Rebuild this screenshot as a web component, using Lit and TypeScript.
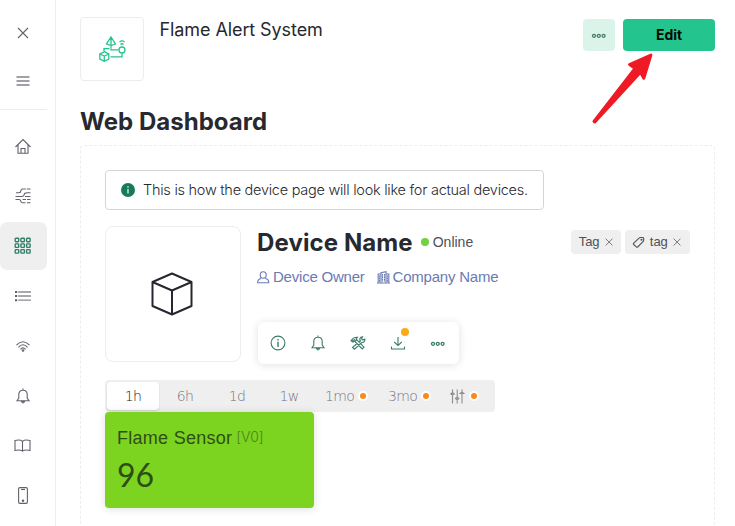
import { LitElement, html, css, svg } from "lit";
import { customElement, property } from "lit/decorators.js";

const shapes: Record<string, { box: string; body: unknown }> = {
  close: { box: "0 0 12 12", body: svg`<path d="M1 1L11 11M11 1L1 11"/>` },
  menu: { box: "0 0 14 12", body: svg`<g stroke-width="1.500" opacity=".8"><path d="M.5 2H13.500M.5 6H13.500M.5 10H13.500"/></g>` },
  home: { box: "0 0 16 16", body: svg`<path d="M.5 9L8 1.500L15.500 9M3 7V15.300H13V7M6 15.300V10.500H10V15.300"/>` },
  flow: {
    box: "0 0 16 16",
    body: svg`<path d="M15.500 1H11.800M10.800 1H8Q5.800 1 5.800 3Q5.800 4.700 4 4.700H1M15.500 4.700H12L9.500 5.500Q9 8.500 7 8.500H.5M15.500 8.500H10M.5 11.500H4Q5.500 11.500 5.800 13.200Q6 14.800 8 14.800H10.500M7.500 11.500H11M12 11.500H15.500M12 14.800H15.500"/>`,
  },
  grid: {
    box: "0 0 18 18",
    body: svg`<g stroke-width="1.400">${[1.2, 6.9, 12.6].map((y) =>
      [1.2, 6.9, 12.6].map((x) => svg`<rect x=${x} y=${y} width="3.500" height="3.500" rx=".7"/>`)
    )}</g>`,
  },
  list: { box: "0 0 16 12", body: svg`<path d="M3.200 2H16M3.200 6H16M3.200 10.200H16" stroke-width="1.300" opacity=".75"/><path d="M0 2H2.200M0 6H2.200M0 10.200H2.200" stroke-width="1.900"/>` },
  wifi: {
    box: "0 0 16 13",
    body: svg`<path d="M1.500 5.200Q8 -1.700 14.500 5.200M3.500 7.300Q8 2.300 12.500 7.300M5.500 9.300Q8 6.500 10.500 9.300"/><circle cx="8" cy="10.500" r=".8"/>`,
  },
  bell: {
    box: "0 0 14 16",
    body: svg`<path d="M1 12.700L2.800 10V6.500Q2.800 2.200 7 2.200T11.200 6.500V10L13 12.700ZM7 .5V2M5.500 13.500Q7 16.500 8.500 13.500Z"/>`,
  },
  book: { box: "0 0 18 14", body: svg`<path d="M8.500 2.300C6.500.6 3.500.8 1 1.500V11.500C3.500 10.800 6.500 10.800 8.500 12C10.500 10.800 13.500 10.800 16 11.500V1.500C13.500.8 10.500.6 8.500 2.300V12"/>` },
  phone: { box: "0 0 11 18", body: svg`<rect x=".6" y=".6" width="8.800" height="15.800" rx="1.300"/><path d="M3 2.500H7"/><circle cx="5" cy="13.700" r=".7"/>` },
  more: { box: "0 0 15 5", body: svg`<g stroke-width="1.300"><circle cx="2" cy="2.800" r="1.500"/><circle cx="6.800" cy="2.800" r="1.500"/><circle cx="11.600" cy="2.800" r="1.500"/></g>` },
  infoFill: { box: "0 0 14 14", body: svg`<circle cx="7" cy="7" r="7" fill="currentColor" stroke="none"/><path d="M7 6V10.500M7 3.300V4.700" stroke="#d6e8e2" stroke-width="1.400"/>` },
  info: { box: "0 0 16 16", body: svg`<circle cx="8" cy="8" r="6.900"/><path d="M8 6.700V12M8 4V5.500" stroke-width="1.400"/>` },
  tools: {
    box: "0 0 16 14",
    body: svg`<path d="M1 4.800Q3 1 7.500 1.200L6 3L14 11.200L12.200 13L4.500 5L3 6ZM10 4.500Q9 1.500 12.500.8L11.500 2.800L13 4L14.800 3Q15.300 6.500 11.800 6.500L4.500 13.200L2.500 11.500L7 7.500M2 4.500L5 3.500M7 4L5 5M9 6L11 4.500"/>`,
  },
  download: { box: "0 0 16 14", body: svg`<path d="M8 1V9.500M4.300 6L8 9.600L11.700 6M1.500 10.500V13H14.500V10.500"/>` },
  user: { box: "0 0 13 13", body: svg`<ellipse cx="6.200" cy="4" rx="3" ry="3.300"/><path d="M4 7.500Q.6 8 .6 11.700H11.800Q11.800 8 8.400 7.500"/>` },
  company: {
    box: "0 0 13 13",
    body: svg`<path d="M4 12V1.800L9 .7V12M4 3H1.200V12M9 3H11.800V12M0 12H13"/><path d="M5.500 3V10.500M7.500 3V10.500M2.600 4.500V11M10.400 4.500V11" stroke-dasharray="1.800 .4"/>`,
  },
  tag: { box: "0 0 12 12", body: svg`<path d="M.5 7.300L6 2.100Q6.500 1.500 7.500 1.500H10L10.700 2.200V4.300Q10.700 5 10 5.700L4.700 11Q4 11.500 3.300 10.800L.7 8.500Q.1 7.900 .5 7.300Z"/><circle cx="8.500" cy="3.700" r=".5"/>` },
  sliders: {
    box: "0 0 14 15",
    body: svg`<path opacity=".8" d="M2.500.5V14.500M7.200.5V14.500M12 .5V14.500M.8 5L2.500 3.500L4.200 5L2.500 6ZM5.500 9.500L7.200 8L8.900 9.500L7.200 11ZM10.200 4.500L12 3L13.800 4.500Z"/>`,
  },
  cube: { box: "0 0 42 44", body: svg`<path d="M20 1.500L39.500 10V34L20 42.500L.5 34V10ZM.5 10L20 18.500L39.500 10M20 18.500V42.500" stroke-width="2" stroke-linejoin="round"/>` },
  flame: {
    box: "0 0 27 26",
    body: svg`<g stroke-width="1.300"><path d="M12 1L16.500 8L12 9.500L7.500 8ZM12 1V9.500M12 9.500V12.500M5 15V12.700H10.500M12 12.700V13.800H19.500M11.500 20.800H23V17.500M20.500 6Q23 3.800 25.500 6M21.500 8.500Q23 7 24.500 8.500"/><circle cx="23" cy="14" r="3"/><path d="M5.300 15.700L9.800 18V23L5.300 25.300L.8 23V18ZM.8 18L5.300 20L9.800 18M5.300 20V25.300"/></g>`,
  },
};

@customElement("ui-icon")
class UiIcon extends LitElement {
  @property() name = "close";
  static styles = css`
    :host { display: inline-flex; flex: none; }
    svg { display: block; overflow: visible; fill: none; stroke: currentColor; stroke-width: 1.1; }
  `;
  render() {
    const shape = shapes[this.name];
    const [, , w, h] = shape.box.split(" ");
    return html`<svg width=${w} height=${h} viewBox=${shape.box}>${shape.body}</svg>`;
  }
}

@customElement("side-nav")
class SideNav extends LitElement {
  static styles = css`
    :host { display: flex; flex-direction: column; box-sizing: border-box; width: 56px; height: 526px; padding-top: 9px; border-right: 1px solid #ededee; color: #62626c; overflow: hidden; flex: none; }
    .item { display: flex; align-items: center; justify-content: center; width: 46px; height: 48px; margin-bottom: 2px; flex: none; }
    .top { margin-bottom: 0; }
    .active { width: 47px; padding-right: 2px; box-sizing: border-box; background: #efefef; border-radius: 7px; color: #347f68; }
    .line { width: 47px; height: 1px; margin: 4px 0 12px; background: #ececed; flex: none; }
  `;
  render() {
    return html`
      <div class="item top"><ui-icon name="close"></ui-icon></div>
      <div class="item top"><ui-icon name="menu"></ui-icon></div>
      <div class="line"></div>
      ${["home", "flow", "grid", "list", "wifi", "bell", "book", "phone"].map(
        (n) => html`<div class="item ${n === "grid" ? "active" : ""}"><ui-icon name=${n}></ui-icon></div>`
      )}
    `;
  }
}

@customElement("app-root")
class AppRoot extends LitElement {
  static styles = css`
    :host { display: flex; width: 735px; height: 526px; overflow: hidden; position: relative; background: #fff; color: #28282f; font-family: Inter, "Liberation Sans", sans-serif; white-space: nowrap; }
    main { flex: 1; padding: 17px 20px 0 24px; box-sizing: border-box; min-width: 0; }
    header { display: flex; height: 64px; }
    .logo { box-sizing: border-box; width: 64px; height: 64px; border: 1px solid #ececed; border-radius: 4px; display: flex; align-items: center; justify-content: center; color: #24c48e; }
    .title { margin: 0 auto 0 15.5px; font: 400 18px/26px Inter, sans-serif; letter-spacing: -0.09px; }
    .dots { width: 32px; height: 32px; margin: 2px 8px 0 0; border-radius: 4px; background: #daf4ea; color: #4c7b6b; display: flex; align-items: center; justify-content: center; }
    .edit { width: 92px; height: 32px; margin-top: 2px; border-radius: 4px; background: #24c48e; color: #050b09; font: 700 14px/32px Inter, sans-serif; text-align: center; }
    h1 { margin: 26px 0 8px; font: 700 24px/30px Inter, sans-serif; letter-spacing: 0.03px; }
    .board { border: 1px dashed #ededee; border-radius: 4px; height: 400px; padding: 24px; box-sizing: border-box; }
    .notice { display: flex; align-items: center; gap: 8px; box-sizing: border-box; width: 439px; height: 40px; padding: 0 15px; border: 1px solid #d5d5d6; border-radius: 4px; font: 300 14.5px/20px Inter, sans-serif; letter-spacing: -0.26px; }
    .notice ui-icon { color: #187a5b; }
    .device { display: flex; margin-top: 16px; height: 136px; }
    .picture { box-sizing: border-box; width: 136px; border: 1px solid #ededee; border-radius: 8px; display: flex; align-items: center; justify-content: center; color: #28262e; flex: none; }
    .details { flex: 1; margin-left: 16px; }
    .row { display: flex; align-items: center; height: 32px; }
    .name { font: 700 24px/34px Inter, sans-serif; letter-spacing: 0.1px; padding-top: 1px; }
    .online { width: 8px; height: 8px; border-radius: 50%; background: #72d13d; margin: 0 4px 0 8px; }
    .status { font: 400 14px/20px "Liberation Sans", sans-serif; color: #505058; }
    .tags { display: flex; gap: 4px; margin-left: auto; }
    .tag { display: flex; align-items: center; box-sizing: border-box; height: 24px; border-radius: 4px; background: #efefef; color: #505057; font: 400 13px/20px "Liberation Sans", sans-serif; padding: 0 9px 0 8px; gap: 5px; }
    .plain { padding-right: 8px; }
    .small { zoom: .68; }
    .links { display: flex; align-items: center; margin-top: 9px; height: 20px; gap: 3px; color: #6b7ab2; font: 400 15px/20px "Liberation Sans", sans-serif; letter-spacing: -0.22px; }
    .company { margin-left: 9px; }
    .actions { display: flex; box-sizing: border-box; width: 201px; height: 42px; margin: 35px 0 0 1px; border-radius: 6px; box-shadow: 0 1px 8px #0000001f; color: #3a7c69; }
    .action { position: relative; width: 40px; display: flex; align-items: center; justify-content: center; }
    .badge { position: absolute; right: 9px; top: 6px; width: 8px; height: 8px; border-radius: 50%; background: #fbaa19; }
    .tabs { display: flex; box-sizing: border-box; width: 390px; height: 32px; margin-top: 18px; padding: 2px; background: #efefef; border-radius: 4px; color: #74747a; font: 200 14px/28px "DejaVu Sans", sans-serif; letter-spacing: -0.7px; }
    .tab { width: 52px; text-align: center; }
    .on { background: #fff; border-radius: 4px; color: #17171c; box-shadow: 0 1px 2px #0002; }
    .wide { display: flex; align-items: center; width: 63px; box-sizing: border-box; padding-left: 10px; }
    .last { width: 50px; padding-left: 9px; }
    .orange { width: 6px; height: 6px; border: 2px solid #fff; border-radius: 50%; background: #fb8a18; margin-left: 4px; }
    .last .orange { margin-left: 4.5px; }
    .widget { box-sizing: border-box; width: 209px; height: 96px; padding: 14px 12px; border-radius: 4px; background: #7cd420; box-shadow: 0 1px 8px #0002; color: #2e4e17; position: relative; }
    .sensor { display: flex; align-items: center; gap: 4px; font: 400 18px/24px "Liberation Sans", sans-serif; letter-spacing: 0.27px; }
    .pin { font: 300 14px/22px Inter, sans-serif; color: #4c811b; letter-spacing: -0.1px; padding-bottom: 2px; }
    .value { font: 400 32px/38px Lato, sans-serif; margin-top: 6px; }
    .arrow { position: absolute; left: 590px; top: 50px; fill: #ef1b24; stroke: #ef1b24; stroke-width: 3; stroke-linejoin: round; }
  `;
  render() {
    return html`
      <side-nav></side-nav>
      <main>
        <header>
          <div class="logo"><ui-icon name="flame"></ui-icon></div>
          <div class="title">Flame Alert System</div>
          <div class="dots"><ui-icon name="more"></ui-icon></div>
          <div class="edit">Edit</div>
        </header>
        <h1>Web Dashboard</h1>
        <section class="board">
          <div class="notice"><ui-icon name="infoFill"></ui-icon><span class="message">This is how the device page will look like for actual devices.</span></div>
          <div class="device">
            <div class="picture"><ui-icon name="cube"></ui-icon></div>
            <div class="details">
              <div class="row">
                <span class="name">Device Name</span><span class="online"></span><span class="status">Online</span>
                <div class="tags">
                  <div class="tag plain"><span>Tag</span><ui-icon class="small" name="close"></ui-icon></div>
                  <div class="tag"><ui-icon name="tag"></ui-icon><span>tag</span><ui-icon class="small" name="close"></ui-icon></div>
                </div>
              </div>
              <div class="links">
                <ui-icon name="user"></ui-icon><span class="owner">Device Owner</span>
                <ui-icon class="company" name="company"></ui-icon><span class="firm">Company Name</span>
              </div>
              <div class="actions">
                ${["info", "bell", "tools", "download", "more"].map(
                  (n) => html`<div class="action"><ui-icon name=${n}></ui-icon>${n === "download" ? html`<i class="badge"></i>` : ""}</div>`
                )}
              </div>
            </div>
          </div>
          <div class="tabs">
            <div class="tab on">1h</div><div class="tab">6h</div><div class="tab">1d</div><div class="tab">1w</div>
            <div class="wide"><span>1mo</span><i class="orange"></i></div>
            <div class="wide"><span>3mo</span><i class="orange"></i></div>
            <div class="wide last"><ui-icon name="sliders"></ui-icon><i class="orange"></i></div>
          </div>
          <div class="widget">
            <div class="sensor"><span>Flame Sensor</span><span class="pin">[V0]</span></div>
            <div class="value">96</div>
          </div>
        </section>
      </main>
      <svg class="arrow" width="66" height="76" viewBox="0 0 66 76"><path d="M60.900 5L39.500 14.500L45 18.300L4 71.300L4.800 72L50.500 22.300L53.800 28.300Z"/></svg>
    `;
  }
}
